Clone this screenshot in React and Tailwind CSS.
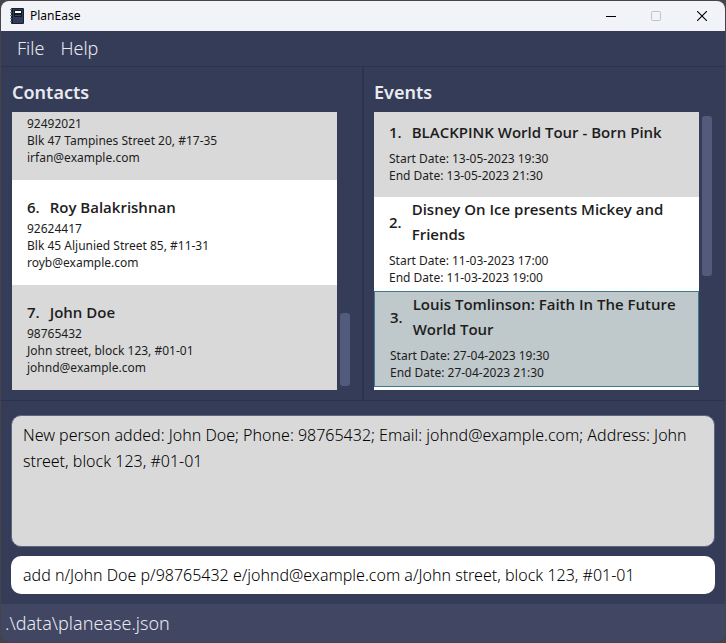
const contacts = [
  {
    phone: '92492021',
    address: 'Blk 47 Tampines Street 20, #17-35',
    email: 'irfan@example.com',
  },
  {
    id: '6.',
    name: 'Roy Balakrishnan',
    phone: '92624417',
    address: 'Blk 45 Aljunied Street 85, #11-31',
    email: 'royb@example.com',
  },
  {
    id: '7.',
    name: 'John Doe',
    phone: '98765432',
    address: 'John street, block 123, #01-01',
    email: 'johnd@example.com',
  },
];

const events = [
  {
    id: '1.',
    name: 'BLACKPINK World Tour - Born Pink',
    start: '13-05-2023 19:30',
    end: '13-05-2023 21:30',
    style: 'bg-[#d9d9d9] pt-2 pb-[13px]',
  },
  {
    id: '2.',
    name: 'Disney On Ice presents Mickey and Friends',
    start: '11-03-2023 17:00',
    end: '11-03-2023 19:00',
    style: 'bg-white pb-[5px]',
  },
  {
    id: '3.',
    name: 'Louis Tomlinson: Faith In The Future World Tour',
    start: '27-04-2023 19:30',
    end: '27-04-2023 21:30',
    style: 'border border-[#3e7b91] bg-[#bfc8ca] pb-[5px]',
  },
];

function TitleBar() {
  return (
    <header className="flex h-[30px] shrink-0 items-center bg-[#f2f3f9] text-black">
      <svg className="ml-2 size-4" viewBox="0 0 16 16" aria-hidden="true">
        <rect x="2" y="0" width="13" height="16" rx="1" fill="#1d1f2b" />
        <rect x="4" y="1" width="10" height="14" fill="#2f3c5e" />
        <rect x="5" y="2" width="8" height="7" fill="#171922" />
        <rect x="6" y="3" width="6" height="2" fill="#fff" />
        <path d="M6 7.5h6" stroke="#3b4866" />
        <path d="M1 1.5h2M1 4.5h2M1 7.5h2M1 10.5h2M1 13.5h2" stroke="#5d7f8e" />
      </svg>
      <h1 className="ml-[5px] flex-1 text-[12px]">PlanEase</h1>
      <button type="button" aria-label="Minimize" className="grid h-full w-11 place-items-center">
        <svg className="size-[10px]" viewBox="0 0 10 10">
          <path d="M0 5.5h10" stroke="#000" />
        </svg>
      </button>
      <button type="button" aria-label="Maximize" disabled className="grid h-full w-[46px] place-items-center">
        <svg className="size-[10px]" viewBox="0 0 10 10">
          <rect x=".5" y=".5" width="9" height="9" rx="1" fill="none" stroke="#c3c3c7" />
        </svg>
      </button>
      <button type="button" aria-label="Close" className="grid h-full w-[46px] place-items-center">
        <svg className="size-[10px]" viewBox="0 0 10 10">
          <path d="M0 0l10 10M10 0L0 10" stroke="#000" strokeWidth="1.1" />
        </svg>
      </button>
    </header>
  );
}

function CellTitle({ id, name }) {
  return (
    <h3 className="flex items-center gap-[10px] pr-4 font-['Open_Sans','Noto_Sans',sans-serif] text-[15px] leading-[25px] font-semibold">
      <span>{id}</span>
      <span>{name}</span>
    </h3>
  );
}

function Panel({ title, align, thumb, children }) {
  return (
    <section className="flex min-w-0 flex-1 flex-col pt-3 pb-[10px]">
      <h2 className="mb-[6px] text-[18px] leading-[27px] font-semibold text-[#e8eaf0]">{title}</h2>
      <div className="flex min-h-0 flex-1">
        <ul className={`flex min-w-0 flex-1 flex-col overflow-hidden bg-white text-[#1d1d1d] ${align}`}>
          {children}
        </ul>
        <div className={`flex shrink-0 flex-col py-1 pl-[3px] ${align}`}>
          <div className={`w-[10px] rounded-[3px] bg-[#535b7c] ${thumb}`} />
        </div>
      </div>
    </section>
  );
}

export default function App() {
  return (
    <div className="h-screen bg-[#454547] p-px font-['Noto_Sans','Open_Sans',sans-serif]">
      <div className="flex h-full flex-col overflow-hidden rounded-lg bg-[#353c57]">
        <TitleBar />
        <nav className="flex h-9 shrink-0 items-center gap-4 border-b border-[#2d334d] px-4 text-[18px] font-light text-[#e8eaf0]">
          <button type="button">File</button>
          <button type="button">Help</button>
        </nav>

        <main className="flex min-h-0 flex-1 border-b border-[#2d334d]">
          <div className="flex flex-1 border-r-2 border-[#2d334d] pr-3 pl-[11px]">
            <Panel title="Contacts" align="justify-end" thumb="h-[73px]">
              {contacts.map((c) => (
                <li
                  key={c.phone}
                  className="shrink-0 pt-[15px] pb-[14px] pl-[15px] text-[12px] leading-[17px] first:pt-[3px] odd:bg-[#d9d9d9]"
                >
                  {c.name && <CellTitle id={c.id} name={c.name} />}
                  <p>{c.phone}</p>
                  <p>{c.address}</p>
                  <p>{c.email}</p>
                </li>
              ))}
            </Panel>
          </div>
          <div className="flex flex-1 pr-[13px] pl-[10px]">
            <Panel title="Events" align="justify-start" thumb="h-[160px]">
              {events.map((e) => (
                <li key={e.id} className={`shrink-0 pl-[15px] text-[12px] leading-[17px] ${e.style}`}>
                  <CellTitle id={e.id} name={e.name} />
                  <p className="mt-[5px]">Start Date: {e.start}</p>
                  <p>End Date: {e.end}</p>
                </li>
              ))}
            </Panel>
          </div>
        </main>

        <div className="flex shrink-0 flex-col gap-[9px] px-[10px] pt-[14px] pb-[10px] text-[16px] font-light">
          <textarea
            readOnly
            aria-label="Result"
            className="h-[132px] resize-none rounded-[10px] border border-[#5d6484] bg-[#d9d9d9] px-[11px] py-[6px] leading-[26px] text-black outline-none"
            defaultValue="New person added: John Doe; Phone: 98765432; Email: johnd@example.com; Address: John street, block 123, #01-01"
          />
          <input
            type="text"
            aria-label="Command"
            className="h-[38px] rounded-[10px] bg-white px-3 text-black outline-none"
            defaultValue="add n/John Doe p/98765432 e/johnd@example.com a/John street, block 123, #01-01"
          />
        </div>

        <footer className="flex h-[38px] shrink-0 items-center bg-[#414663] px-1 text-[18px] font-light text-[#e8eaf0]">
          .\data\planease.json
        </footer>
      </div>
    </div>
  );
}
